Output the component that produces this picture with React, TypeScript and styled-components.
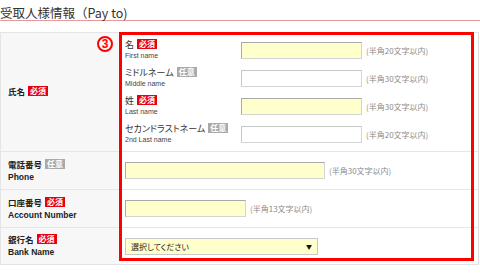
import { createGlobalStyle } from 'styled-components';
import styled from 'styled-components';

const GlobalStyle = createGlobalStyle`
	html, body {
		margin: 0;
		padding: 0;
		background: #fff;
	}
	body {
		font-family: 'Noto Sans CJK JP', 'DejaVu Sans', sans-serif;
		font-feature-settings: 'palt';
		color: #333;
	}
`;

const Page = styled.div`
	width: 480px;
	height: 273px;
	overflow: hidden;
`;

const Heading = styled.h2`
	margin: 0;
	padding-top: 5px;
	height: 15px;
	line-height: 15px;
	font-size: 12.5px;
	font-weight: normal;
	font-feature-settings: normal;
	color: #333;
	border-bottom: 1px solid #e89a9a;
`;

const Wrap = styled.div`
	position: relative;
	margin-top: 11px;
	width: 479px;
`;

const Table = styled.div`
	border: 1px solid #e4e4e4;
	border-right-color: #e0e0e0;
`;

const Row = styled.div<{ h: number }>`
	display: grid;
	grid-template-columns: 119px 1fr;
	height: ${(p) => p.h}px;
	border-bottom: 1px solid #e6e6e6;
	&:last-child {
		border-bottom: none;
	}
`;

const Label = styled.div`
	background: #f7f7f7;
	padding-left: 7px;
	display: flex;
	flex-direction: column;
	justify-content: center;
	font-family: 'Liberation Sans', 'Noto Sans CJK JP', sans-serif;
	font-size: 8.5px;
	font-weight: bold;
	color: #222;
	line-height: 12px;
`;

const Cell = styled.div`
	display: flex;
	align-items: center;
	padding-left: 5px;
`;

const NameCell = styled.div`
	padding: 3px 0 0 5px;
	display: flex;
	flex-direction: column;
`;

const SubRow = styled.div`
	display: grid;
	grid-template-columns: 116px auto;
	align-items: center;
	height: 28px;
`;

const SubLabel = styled.div`
	font-size: 9px;
	line-height: 11px;
	color: #333;
`;

const SubEn = styled.div`
	font-family: 'Liberation Sans', sans-serif;
	font-size: 7px;
	line-height: 10px;
	color: #444;
	margin-top: 1px;
`;

const Badge = styled.span<{ optional?: boolean }>`
	display: inline-block;
	margin-left: 3px;
	padding: 0 2px;
	font-family: 'Noto Sans CJK JP', sans-serif;
	font-size: 8px;
	line-height: 10px;
	font-weight: bold;
	color: #fff;
	background: ${(p) => (p.optional ? '#a9a9a9' : '#e60012')};
	vertical-align: 1px;
`;

const Field = styled.div`
	display: flex;
	align-items: center;
`;

const Input = styled.div<{ w: number; white?: boolean }>`
	width: ${(p) => p.w}px;
	height: 17px;
	box-sizing: border-box;
	background: ${(p) => (p.white ? '#fff' : '#ffffcc')};
	border: 1px solid #d4d4d4;
	border-top-color: ${(p) => (p.white ? '#c8c8c8' : '#a9a9a9')};
	border-left-color: ${(p) => (p.white ? '#c8c8c8' : '#a9a9a9')};
`;

const Hint = styled.span`
	margin-left: 4px;
	font-size: 8px;
	color: #8a8a8a;
	white-space: nowrap;
`;

const SelectBox = styled.div`
	width: 193px;
	height: 17px;
	box-sizing: border-box;
	background: #ffffcc;
	border: 1px solid #c8c8c8;
	display: flex;
	align-items: center;
	justify-content: space-between;
	padding: 0 5px 0 5px;
	font-size: 8px;
	color: #222;
`;

const Arrow = styled.span`
	font-size: 6px;
	color: #111;
`;

const Highlight = styled.div`
	position: absolute;
	left: 119px;
	top: 0;
	width: 355px;
	height: 229px;
	box-sizing: border-box;
	border: 3px solid #ff0000;
	pointer-events: none;
`;

const StepMark = styled.div`
	position: absolute;
	left: 97px;
	top: 4px;
	width: 16px;
	height: 16px;
	box-sizing: border-box;
	border: 2px solid #ff0000;
	border-radius: 50%;
	color: #ff0000;
	font-family: 'Liberation Sans', Arial, sans-serif;
	font-weight: bold;
	font-size: 12px;
	line-height: 12px;
	text-align: center;
`;

const names = [
	{ jp: '名', en: 'First name', optional: false, white: false, hint: '(半角20文字以内)' },
	{ jp: 'ミドルネーム', en: 'Middle name', optional: true, white: true, hint: '(半角30文字以内)' },
	{ jp: '姓', en: 'Last name', optional: false, white: false, hint: '(半角30文字以内)' },
	{ jp: 'セカンドラストネーム', en: '2nd Last name', optional: true, white: true, hint: '(半角20文字以内)' },
];

const App = () => {
	return (
		<Page>
			<GlobalStyle />
			<Heading>受取人様情報（Pay to)</Heading>
			<Wrap>
				<Table>
					<Row h={118}>
						<Label>
							<div>
								氏名<Badge>必須</Badge>
							</div>
						</Label>
						<NameCell>
							{names.map((n) => (
								<SubRow key={n.en}>
									<div>
										<SubLabel>
											{n.jp}
											<Badge optional={n.optional}>{n.optional ? '任意' : '必須'}</Badge>
										</SubLabel>
										<SubEn>{n.en}</SubEn>
									</div>
									<Field>
										<Input w={121} white={n.white} />
										<Hint>{n.hint}</Hint>
									</Field>
								</SubRow>
							))}
						</NameCell>
					</Row>
					<Row h={37}>
						<Label>
							<div>
								電話番号<Badge optional>任意</Badge>
							</div>
							<div>Phone</div>
						</Label>
						<Cell>
							<Input w={200} />
							<Hint>(半角30文字以内)</Hint>
						</Cell>
					</Row>
					<Row h={37}>
						<Label>
							<div>
								口座番号<Badge>必須</Badge>
							</div>
							<div>Account Number</div>
						</Label>
						<Cell>
							<Input w={121} />
							<Hint>(半角13文字以内)</Hint>
						</Cell>
					</Row>
					<Row h={36}>
						<Label>
							<div>
								銀行名<Badge>必須</Badge>
							</div>
							<div>Bank Name</div>
						</Label>
						<Cell>
							<SelectBox>
								<span>選択してください</span>
								<Arrow>▼</Arrow>
							</SelectBox>
						</Cell>
					</Row>
				</Table>
				<Highlight />
				<StepMark>3</StepMark>
			</Wrap>
		</Page>
	);
};

export default App;
